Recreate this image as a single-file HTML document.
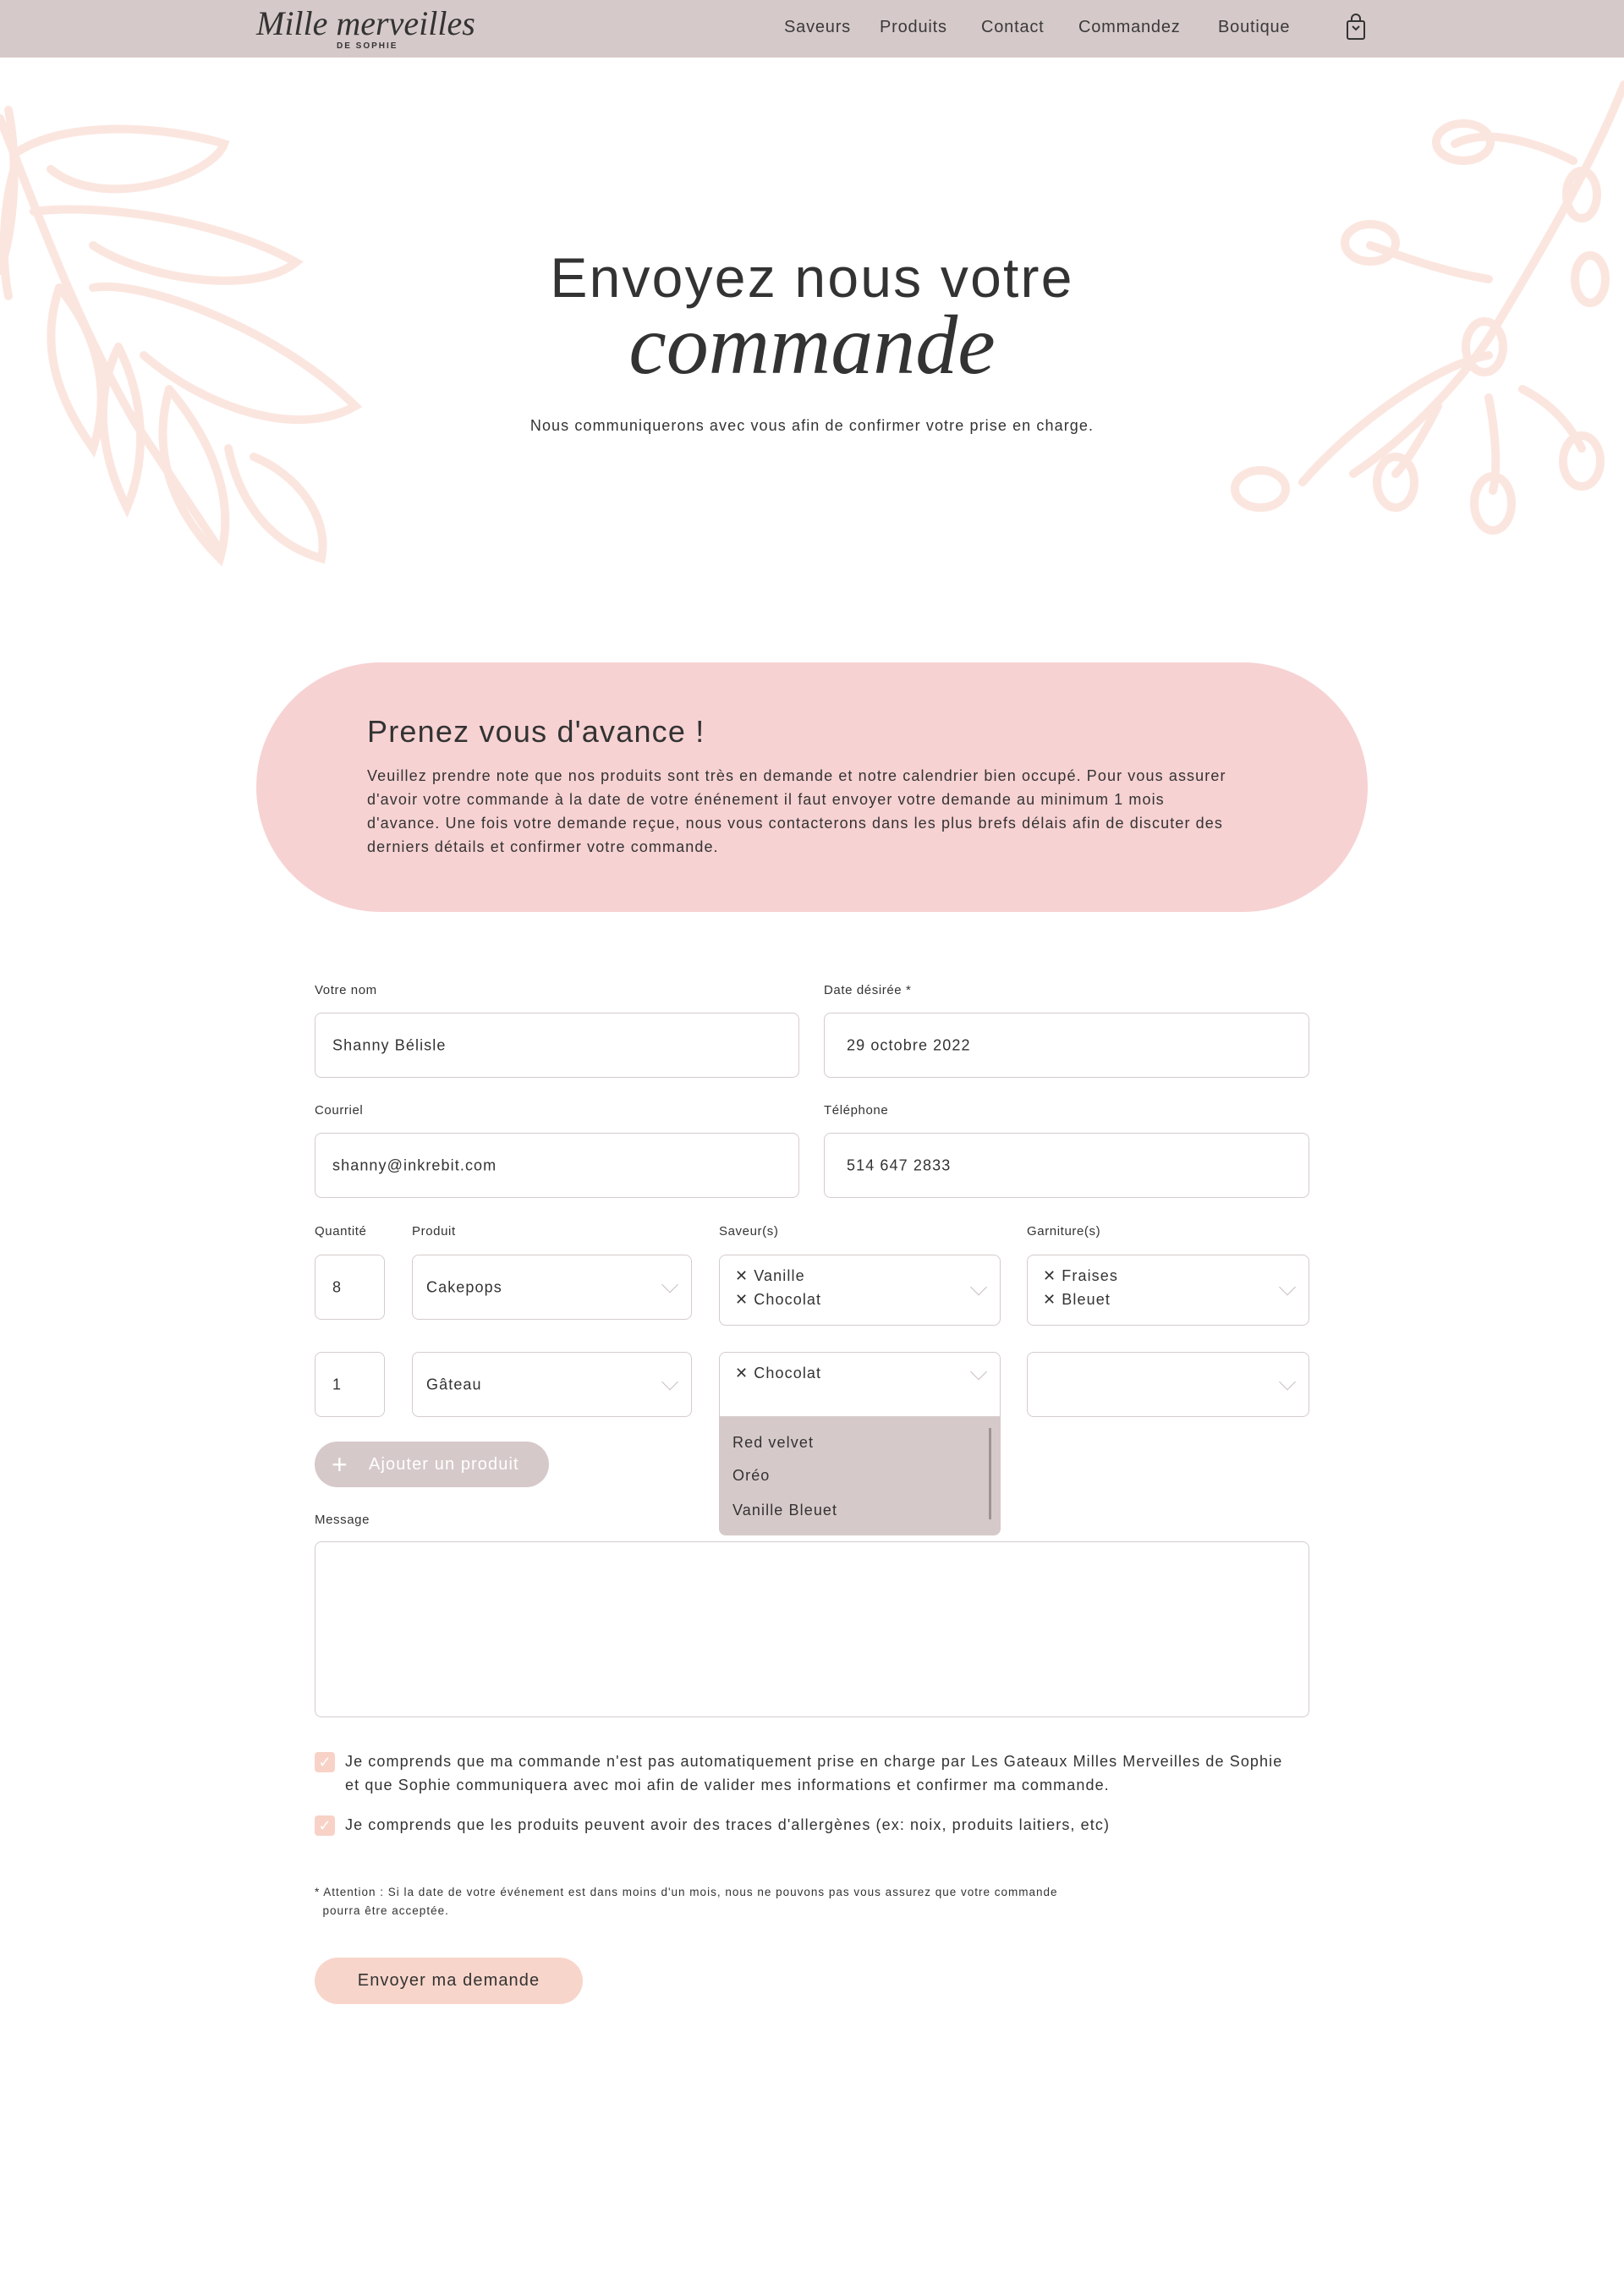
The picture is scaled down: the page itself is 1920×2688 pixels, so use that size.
<!DOCTYPE html>
<html><head><meta charset="utf-8"><style>
*{box-sizing:border-box;margin:0;padding:0}
body{width:1920px;height:2688px;position:relative;background:#fff;font-family:"Liberation Sans",sans-serif;color:#333;overflow:hidden;letter-spacing:1.1px}
.a{position:absolute;white-space:nowrap}
nav{position:absolute;left:0;top:0;width:1920px;height:68px;background:#d6c9c9}
.nv{position:absolute;top:21px;font-size:20px;color:#3a3a3a;letter-spacing:0.8px}
.lbl{position:absolute;font-size:15px;color:#333;letter-spacing:0.6px}
.box{position:absolute;border:1.5px solid #d6cccc;border-radius:8px;background:#fff;font-size:18px;color:#333}
.box span{position:absolute;left:20px;top:50%;transform:translateY(-50%)}
.chev{position:absolute;right:18px;top:50%;width:14px;height:14px;border-right:1.5px solid #c8bcbc;border-bottom:1.5px solid #c8bcbc;transform:translateY(-75%) rotate(45deg)}
.tag{position:absolute;left:18px;font-size:18px}
.cb{position:absolute;width:24px;height:24px;background:#f8d2c6;border-radius:4px;color:#fff;font-size:18px;text-align:center;line-height:24px;letter-spacing:0}
</style></head><body>
<nav>
<div class="a" style="left:303px;top:4px;font-family:'Liberation Serif',serif;font-style:italic;font-size:40px;color:#333;letter-spacing:0">Mille merveilles</div>
<div class="a" style="left:398px;top:49px;font-size:10px;letter-spacing:2px;color:#333;font-weight:bold">DE SOPHIE</div>
<div class="nv" style="left:927px">Saveurs</div>
<div class="nv" style="left:1040px">Produits</div>
<div class="nv" style="left:1160px">Contact</div>
<div class="nv" style="left:1275px">Commandez</div>
<div class="nv" style="left:1440px">Boutique</div>
<svg class="a" style="left:1590px;top:16px" width="26" height="32" viewBox="0 0 26 32" fill="none" stroke="#333" stroke-width="2"><rect x="3" y="9" width="20" height="21" rx="2"/><path d="M8 9V6a5 5 0 0 1 10 0v3M9 15l4 4 4-4"/></svg>
</nav>
<svg class="a" style="left:0;top:68px" width="1920" height="620" viewBox="0 68 1920 620" fill="none" stroke="#fbe6df" stroke-width="10" stroke-linecap="round">
<path d="M0 140 C40 240 90 380 160 500 C200 560 240 620 260 650"/>
<path d="M20 180 C80 140 200 150 265 170 C250 210 120 250 60 200"/>
<path d="M40 250 C120 240 260 260 350 310 C300 350 170 330 110 290"/>
<path d="M20 190 C5 230 0 300 10 350 M70 340 C50 400 60 460 110 530 C130 470 120 400 70 340"/>
<path d="M110 340 C170 330 330 390 420 480 C350 520 240 480 170 420"/>
<path d="M140 410 C110 470 120 540 150 600 C175 540 170 470 140 410"/>
<path d="M200 460 C180 530 200 600 260 660 C280 590 250 520 200 460"/>
<path d="M270 530 C280 580 310 640 380 660 C390 610 350 560 300 540"/>
<path d="M10 130 C20 180 20 260 0 320"/>
<path d="M1920 100 C1880 200 1820 300 1760 400 C1720 460 1660 520 1600 560"/>
<path d="M1860 190 C1820 170 1760 150 1720 170 M1760 330 C1700 320 1650 300 1620 290"/>
<ellipse cx="1730" cy="168" rx="32" ry="22"/><ellipse cx="1620" cy="287" rx="30" ry="22"/>
<ellipse cx="1870" cy="230" rx="18" ry="28"/><ellipse cx="1880" cy="330" rx="18" ry="28"/>
<path d="M1760 420 C1700 430 1600 500 1540 570"/>
<ellipse cx="1490" cy="578" rx="30" ry="22"/><ellipse cx="1650" cy="570" rx="22" ry="30"/>
<ellipse cx="1765" cy="595" rx="22" ry="32"/><ellipse cx="1870" cy="545" rx="22" ry="30"/>
<path d="M1700 480 C1680 520 1660 550 1650 560 M1760 470 C1770 520 1770 560 1765 580 M1800 460 C1840 480 1860 510 1870 530"/>
<ellipse cx="1755" cy="410" rx="22" ry="30"/>
</svg>
<div class="a" style="left:0;width:1920px;top:290px;text-align:center;font-size:66px;color:#333;letter-spacing:2.2px">Envoyez nous votre</div>
<div class="a" style="left:0;width:1920px;top:350px;text-align:center;font-family:'Liberation Serif',serif;font-style:italic;font-size:100px;color:#333;letter-spacing:0">commande</div>
<div class="a" style="left:0;width:1920px;top:493px;text-align:center;font-size:18px;color:#333">Nous communiquerons avec vous afin de confirmer votre prise en charge.</div>
<div class="a" style="left:303px;top:783px;width:1314px;height:295px;background:#f7d2d3;border-radius:148px"></div>
<div class="a" style="left:434px;top:844px;font-size:36px;color:#333;letter-spacing:1.2px">Prenez vous d'avance !</div>
<div class="a" style="left:434px;top:903px;font-size:18px;line-height:28px;color:#333">Veuillez prendre note que nos produits sont très en demande et notre calendrier bien occupé. Pour vous assurer<br>d'avoir votre commande à la date de votre énénement il faut envoyer votre demande au minimum 1 mois<br>d'avance. Une fois votre demande reçue, nous vous contacterons dans les plus brefs délais afin de discuter des<br>derniers détails et confirmer votre commande.</div>

<div class="lbl" style="left:372px;top:1162px">Votre nom</div>
<div class="lbl" style="left:974px;top:1162px">Date désirée *</div>
<div class="box" style="left:372px;top:1197px;width:573px;height:77px"><span>Shanny Bélisle</span></div>
<div class="box" style="left:974px;top:1197px;width:574px;height:77px"><span style="left:26px">29 octobre 2022</span></div>
<div class="lbl" style="left:372px;top:1304px">Courriel</div>
<div class="lbl" style="left:974px;top:1304px">Téléphone</div>
<div class="box" style="left:372px;top:1339px;width:573px;height:77px"><span>shanny@inkrebit.com</span></div>
<div class="box" style="left:974px;top:1339px;width:574px;height:77px"><span style="left:26px">514 647 2833</span></div>

<div class="lbl" style="left:372px;top:1447px">Quantité</div>
<div class="lbl" style="left:487px;top:1447px">Produit</div>
<div class="lbl" style="left:850px;top:1447px">Saveur(s)</div>
<div class="lbl" style="left:1214px;top:1447px">Garniture(s)</div>
<div class="box" style="left:372px;top:1483px;width:83px;height:77px"><span>8</span></div>
<div class="box" style="left:487px;top:1483px;width:331px;height:77px"><span style="left:16px">Cakepops</span><i class="chev"></i></div>
<div class="box" style="left:850px;top:1483px;width:333px;height:84px"><div class="tag" style="top:14px">✕ Vanille</div><div class="tag" style="top:42px">✕ Chocolat</div><i class="chev"></i></div>
<div class="box" style="left:1214px;top:1483px;width:334px;height:84px"><div class="tag" style="top:14px">✕ Fraises</div><div class="tag" style="top:42px">✕ Bleuet</div><i class="chev"></i></div>
<div class="box" style="left:372px;top:1598px;width:83px;height:77px"><span>1</span></div>
<div class="box" style="left:487px;top:1598px;width:331px;height:77px"><span style="left:16px">Gâteau</span><i class="chev"></i></div>
<div class="a" style="left:850px;top:1670px;width:333px;height:145px;background:#d6c9c9;border-radius:0 0 8px 8px"></div>
<div class="a" style="left:1169px;top:1688px;width:3px;height:108px;background:#9e9393"></div>
<div class="a" style="left:866px;top:1695px;font-size:18px">Red velvet</div>
<div class="a" style="left:866px;top:1734px;font-size:18px">Oréo</div>
<div class="a" style="left:866px;top:1775px;font-size:18px">Vanille Bleuet</div>
<div class="box" style="left:850px;top:1598px;width:333px;height:77px;border-radius:8px 8px 0 0"><div class="tag" style="top:14px">✕ Chocolat</div><i class="chev" style="top:26px"></i></div>
<div class="box" style="left:1214px;top:1598px;width:334px;height:77px"><i class="chev"></i></div>
<div class="a" style="left:372px;top:1704px;width:277px;height:54px;border-radius:27px;background:#d6c9c9;color:#fff;font-size:20px;line-height:54px;padding-left:64px">Ajouter un produit</div>
<div class="a" style="left:392px;top:1715px;color:#fff;font-size:32px;line-height:32px">+</div>
<div class="lbl" style="left:372px;top:1788px">Message</div>
<div class="box" style="left:372px;top:1822px;width:1176px;height:208px"></div>

<div class="cb" style="left:372px;top:2071px">✓</div>
<div class="a" style="left:408px;top:2068px;font-size:18px;line-height:28px">Je comprends que ma commande n'est pas automatiquement prise en charge par Les Gateaux Milles Merveilles de Sophie<br>et que Sophie communiquera avec moi afin de valider mes informations et confirmer ma commande.</div>
<div class="cb" style="left:372px;top:2146px">✓</div>
<div class="a" style="left:408px;top:2143px;font-size:18px;line-height:28px">Je comprends que les produits peuvent avoir des traces d'allergènes (ex: noix, produits laitiers, etc)</div>
<div class="a" style="left:372px;top:2226px;font-size:13.5px;line-height:22px;letter-spacing:1px">* Attention : Si la date de votre événement est dans moins d'un mois, nous ne pouvons pas vous assurez que votre commande<br>&nbsp;&nbsp;pourra être acceptée.</div>
<div class="a" style="left:372px;top:2314px;width:317px;height:55px;border-radius:28px;background:#f8d5ca;text-align:center;line-height:55px;font-size:20px;color:#333">Envoyer ma demande</div>
</body></html>
